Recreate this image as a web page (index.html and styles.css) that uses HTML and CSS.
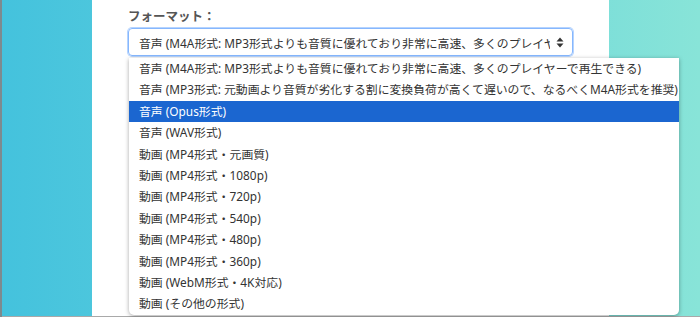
FILE: index.html
```html
<!DOCTYPE html>
<html lang="ja">
<head>
<meta charset="utf-8">
<link rel="stylesheet" href="styles.css">
</head>
<body>
<div class="page">
  <div class="card">
    <div class="field">
      <div class="label">フォーマット：</div>
      <div class="select">
        <span class="select-text">音声 (M4A形式: MP3形式よりも音質に優れており非常に高速、多くのプレイヤーで再生できる)</span>
        <svg class="arrow" width="8" height="11" viewBox="0 0 8 11"><path d="M4 0.5 L7.5 4.5 H0.5 Z M4 10.5 L7.5 6.5 H0.5 Z" fill="#333"/></svg>
      </div>
      <div class="menu">
        <div class="opt">音声 (M4A形式: MP3形式よりも音質に優れており非常に高速、多くのプレイヤーで再生できる)</div>
        <div class="opt">音声 (MP3形式: 元動画より音質が劣化する割に変換負荷が高くて遅いので、なるべくM4A形式を推奨)</div>
        <div class="opt selected">音声 (Opus形式)</div>
        <div class="opt">音声 (WAV形式)</div>
        <div class="opt">動画 (MP4形式・元画質)</div>
        <div class="opt">動画 (MP4形式・1080p)</div>
        <div class="opt">動画 (MP4形式・720p)</div>
        <div class="opt">動画 (MP4形式・540p)</div>
        <div class="opt">動画 (MP4形式・480p)</div>
        <div class="opt">動画 (MP4形式・360p)</div>
        <div class="opt">動画 (WebM形式・4K対応)</div>
        <div class="opt">動画 (その他の形式)</div>
      </div>
    </div>
  </div>
</div>
</body>
</html>
```
FILE: styles.css
```css
html, body {
  margin: 0;
  padding: 0;
  height: 100%;
  overflow: hidden;
}
body {
  font-family: "Noto Sans", "Noto Sans CJK JP", sans-serif;
  background: linear-gradient(to right, #44c2dd 0%, #5ccfdc 40%, #88e4d8 100%);
  border-left: 2px solid #7d8a8e;
  box-sizing: border-box;
}
.page {
  height: 316px;
  border-bottom: 1px solid #a9a9a9;
  padding-left: 90px;
}
.card {
  width: 517px;
  height: 316px;
  background: #fff;
}
.field {
  position: relative;
  padding: 8px 0 0 36px;
}
.label {
  font-size: 12.5px;
  font-weight: 700;
  color: #555;
  line-height: 18px;
  height: 20px;
}
.select {
  width: 445px;
  height: 28px;
  box-sizing: border-box;
  border: 1px solid #86b7fe;
  box-shadow: 0 0 0 1px #b6d4fe;
  border-radius: 4px;
  display: flex;
  align-items: center;
  padding: 0 8px 0 10px;
  gap: 6px;
}
.select-text {
  flex: 1;
  overflow: hidden;
  white-space: nowrap;
  font-size: 11.85px;
  color: #333;
}
.arrow {
  flex: none;
}
.menu {
  position: absolute;
  left: 37px;
  top: 58px;
  width: 550px;
  background: #fff;
  border-radius: 0 0 5px 5px;
  box-shadow: 0 1px 4px rgba(0,0,0,0.35);
}
.opt {
  height: 21.42px;
  line-height: 21.42px;
  padding-left: 10px;
  font-size: 11.85px;
  color: #333;
  white-space: nowrap;
}
.opt.selected {
  background: #1b66d0;
  color: #fff;
}
```
